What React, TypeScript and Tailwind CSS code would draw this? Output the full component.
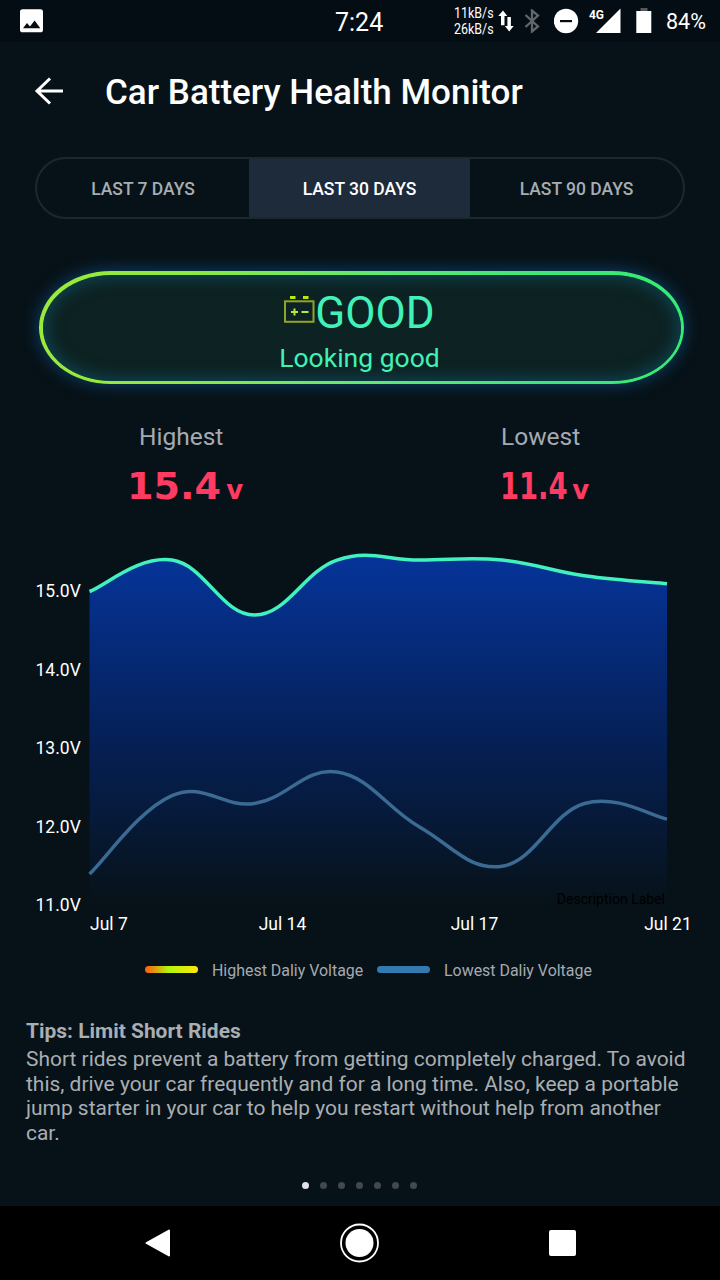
const HIGH = [15.0, 15.4, 14.7, 15.4, 15.4, 15.4, 15.2, 15.1];
const LOW = [11.4, 12.4, 12.3, 12.7, 12.0, 11.5, 12.3, 12.1];

const LEFT = 89.5;
const RIGHT = 667;
const TOP_OFFSET = 540;
const BASE = 905.5 - TOP_OFFSET;
const VOLT = 78.5;

function curve(values: number[]) {
  const step = (RIGHT - LEFT) / (values.length - 1);
  const p = values.map((v, i) => ({ x: LEFT + i * step, y: BASE - (v - 11) * VOLT }));
  const at = (i: number) => p[Math.max(0, Math.min(p.length - 1, i))];
  let d = `M${p[0].x} ${p[0].y}`;
  for (let i = 1; i < p.length; i++) {
    const c1x = at(i - 1).x + (at(i).x - at(i - 2).x) * 0.2;
    const c1y = at(i - 1).y + (at(i).y - at(i - 2).y) * 0.2;
    const c2x = at(i).x - (at(i + 1).x - at(i - 1).x) * 0.2;
    const c2y = at(i).y - (at(i + 1).y - at(i - 1).y) * 0.2;
    d += ` C${c1x} ${c1y} ${c2x} ${c2y} ${at(i).x} ${at(i).y}`;
  }
  return d;
}

function StatusBar() {
  return (
    <div className="flex h-[42px] items-center bg-[#040c14] text-white">
      <svg className="ml-5 block h-6 w-6" viewBox="0 0 24 24">
        <rect x="0" y="0.3" width="23" height="23" rx="2.6" fill="#fff" />
        <path d="M3 19.3l4-5.3 3 3.6 4.600-6 5.700 7.700z" fill="#040c14" />
      </svg>
      <div className="mt-0.5 ml-[291px] w-[60px] text-[25px] leading-none whitespace-nowrap">7:24</div>
      <div className="ml-[59px] flex w-10 origin-left scale-x-[0.89] flex-col text-[14px] leading-[16px] whitespace-nowrap">
        <span>11kB/s</span>
        <span>26kB/s</span>
      </div>
      <svg className="ml-1 block h-6 w-4" viewBox="0 0 16 24">
        <path d="M5 1.500L9.300 7H6.500V16.300H3V7H0.200z M11.200 22.500L6.900 17H9.400V8H12.900V17H15.700z" fill="#fff" />
      </svg>
      <svg className="ml-[10px] block h-6 w-4" viewBox="0 0 16 24">
        <path d="M1.500 6L14 17.500L8 22.500V1.500L14 6.500L1.500 18" fill="none" stroke="#62676c" strokeWidth="2.300" />
      </svg>
      <svg className="ml-[14px] block h-[26px] w-[26px]" viewBox="0 0 26 26">
        <circle cx="12" cy="13" r="12.200" fill="#fff" />
        <rect x="6" y="12" width="12" height="2.200" fill="#040c14" />
      </svg>
      <svg className="ml-[5px] block h-[34px] w-9 overflow-visible" viewBox="0 0 36 34">
        <path d="M35.500 4.500V29H11z" fill="#fff" />
        <path d="M4 4H20V16.500H4z" fill="#040c14" />
        <text x="4" y="15" fontSize="13" fontWeight="700" fill="#fff" textLength="15" lengthAdjust="spacingAndGlyphs">4G</text>
      </svg>
      <svg className="ml-[15px] block h-[26px] w-4" viewBox="0 0 16 26">
        <rect x="4.500" y="0" width="7" height="4" fill="#55585c" />
        <rect x="0.300" y="3" width="15" height="22" fill="#fff" />
      </svg>
      <div className="mt-0.5 ml-[14px] text-[21.500px] leading-none whitespace-nowrap">84%</div>
    </div>
  );
}

function Header() {
  return (
    <div className="flex h-[98px] items-center">
      <svg className="ml-[34px] block h-8 w-8" viewBox="0 0 32 32">
        <path d="M29 16H3M16 3.500L3 16L16 28.500" fill="none" stroke="#fff" strokeWidth="3" />
      </svg>
      <h1 className="mt-0.5 ml-[39px] text-[35px] leading-none font-medium whitespace-nowrap text-white">Car Battery Health Monitor</h1>
    </div>
  );
}

function RangeTabs() {
  return (
    <div className="mx-[35px] mt-[17px] flex h-[62px] overflow-hidden rounded-full border-2 border-[#1c2831] text-[17.500px] font-medium text-[#a5adb3]">
      <button className="w-[212px] pt-0.5">LAST 7 DAYS</button>
      <button className="-my-0.5 w-[221px] bg-[#1e2b3a] pt-0.5 text-white">LAST 30 DAYS</button>
      <button className="flex-1 pt-0.5">LAST 90 DAYS</button>
    </div>
  );
}

function BatteryIcon() {
  return (
    <svg className="mb-[7px] block h-[29px] w-[31px]" viewBox="0 0 31 29">
      <rect x="1" y="6.300" width="28.500" height="20.500" fill="none" stroke="#8fa52a" strokeWidth="2" />
      <path d="M6 1h5.500v3h-5.500zM19 1h5.500v3h-5.500z" fill="#b5ea10" />
      <path d="M7 17h7M10.500 13.500v7M17.500 17h7" stroke="#b9e63c" strokeWidth="2" />
    </svg>
  );
}

function HealthPill() {
  return (
    <div className="mt-[52px] ml-[39px] h-[113px] w-[645px] rounded-[72px/56.5px] bg-[linear-gradient(90deg,#9bea3a_0%,#8bea42_25%,#5ce877_55%,#3ee57a_80%,#35ec72_100%)] p-[3.500px] shadow-[0_0_14px_3px_rgba(12,66,105,0.75)]">
      <div className="flex h-full flex-col items-center rounded-[69px/53px] bg-[#0d2222] pr-[4px] text-[#41f2b8] shadow-[inset_0_0_16px_3px_rgba(14,72,88,0.9)]">
        <div className="mt-[14px] flex h-[48px] items-center">
          <BatteryIcon />
          <span className="text-[44px] leading-none">GOOD</span>
        </div>
        <span className="mt-[6px] text-[26.500px] leading-[30px]">Looking good</span>
      </div>
    </div>
  );
}

function Reading({ label, value, offset, stretch }: { label: string; value: string; offset: string; stretch: string }) {
  return (
    <div className={`flex flex-col ${offset}`}>
      <span className="text-[24.500px] leading-[30px] text-[#a5aab2]">{label}</span>
      <div className="mt-[15px] flex h-[40px] items-baseline font-['DejaVu_Sans'] font-bold whitespace-nowrap text-[#ff3b62]">
        <span className={`origin-left text-[37px] leading-[40px] ${stretch}`}>{value}</span>
        <span className="ml-[5px] text-[26px] leading-[30px]">v</span>
      </div>
    </div>
  );
}

function Chart() {
  const high = curve(HIGH);
  const low = curve(LOW);
  return (
    <svg className="block h-[400px] w-[720px]" viewBox="0 0 720 400">
      <defs>
        <linearGradient id="area" gradientUnits="userSpaceOnUse" x1="0" y1="15" x2="0" y2="365">
          <stop offset="0" stopColor="#05349a" />
          <stop offset="0.500" stopColor="#05215a" />
          <stop offset="1" stopColor="#071218" />
        </linearGradient>
      </defs>
      <path d={`${high} V${BASE} H${LEFT} Z`} fill="url(#area)" />
      <path d={high} fill="none" stroke="#41f2c0" strokeWidth="3.500" />
      <path d={low} fill="none" stroke="#3b6a92" strokeWidth="3.500" />
      <g fill="#fff" fontSize="17.500">
        {[15, 14, 13, 12, 11].map((v) => (
          <text key={v} x="80.8" y={BASE + 5.6 - (v - 11) * VOLT} textAnchor="end">{`${v}.0V`}</text>
        ))}
        <text x="90" y="389.500">Jul 7</text>
        <text x="282.500" y="389.500" textAnchor="middle">Jul 14</text>
        <text x="474.500" y="389.500" textAnchor="middle">Jul 17</text>
        <text x="668" y="389.500" textAnchor="middle">Jul 21</text>
      </g>
      <text x="665" y="364" fontSize="14" textAnchor="end" fill="#000">Description Label</text>
    </svg>
  );
}

function Legend() {
  return (
    <div className="mt-[18px] ml-[145px] flex h-[24px] items-center text-[15.950px] whitespace-nowrap text-[#a5aab0]">
      <span className="mb-0.5 h-[7px] w-[53px] rounded-full bg-[linear-gradient(90deg,#ff5a10,#b4f50a_45%,#ffe60a)]" />
      <span className="mt-0.5 ml-[14px] w-[152px]">Highest Daliy Voltage</span>
      <span className="mb-0.5 ml-[13px] h-[7px] w-[53px] rounded-full bg-[#337ab0]" />
      <span className="mt-0.5 ml-[14px]">Lowest Daliy Voltage</span>
    </div>
  );
}

function Tips() {
  return (
    <div className="mt-[37px] ml-[26px] h-[163px] text-[20.950px] leading-[24.500px] whitespace-nowrap text-[#a9aeb3]">
      <p className="mb-[3.500px] font-bold">Tips: Limit Short Rides</p>
      <p>
        Short rides prevent a battery from getting completely charged. To avoid
        <br />
        this, drive your car frequently and for a long time. Also, keep a portable
        <br />
        jump starter in your car to help you restart without help from another
        <br />
        car.
      </p>
    </div>
  );
}

function NavBar() {
  return (
    <div className="flex h-[74px] items-center bg-black">
      <svg className="ml-[144px] block h-[30px] w-[27px]" viewBox="0 0 27 30">
        <path d="M25 2.500V27.500L2.500 15z" fill="#fff" stroke="#fff" strokeWidth="2" strokeLinejoin="round" />
      </svg>
      <svg className="ml-[168px] block h-10 w-10" viewBox="0 0 40 40">
        <circle cx="20.500" cy="20" r="18.500" fill="none" stroke="#fff" strokeWidth="1.800" />
        <circle cx="20.500" cy="20" r="14" fill="#fff" />
      </svg>
      <div className="ml-[170px] h-[26px] w-[27px] rounded-[2px] bg-white" />
    </div>
  );
}

export default function App() {
  return (
    <div className="flex h-[1280px] w-[720px] flex-col overflow-hidden bg-[#071218] font-['Roboto',sans-serif]">
      <StatusBar />
      <Header />
      <RangeTabs />
      <HealthPill />
      <div className="mt-[38px] flex h-[118px]">
        <Reading label="Highest" value="15.4" offset="ml-[139px] w-[362px] [&>div]:-ml-[12px]" stretch="scale-x-[1.03] mr-[3px]" />
        <Reading label="Lowest" value="11.4" offset="[&>div]:-ml-[1px]" stretch="scale-x-[0.74] -mr-[24px]" />
      </div>
      <Chart />
      <Legend />
      <Tips />
      <div className="flex flex-1 justify-center gap-[11px] pr-px">
        {[0, 1, 2, 3, 4, 5, 6].map((i) => (
          <span key={i} className={`h-[7px] w-[7px] rounded-full ${i === 0 ? 'bg-[#dfe3e5]' : 'bg-[#43484c]'}`} />
        ))}
      </div>
      <NavBar />
    </div>
  );
}
